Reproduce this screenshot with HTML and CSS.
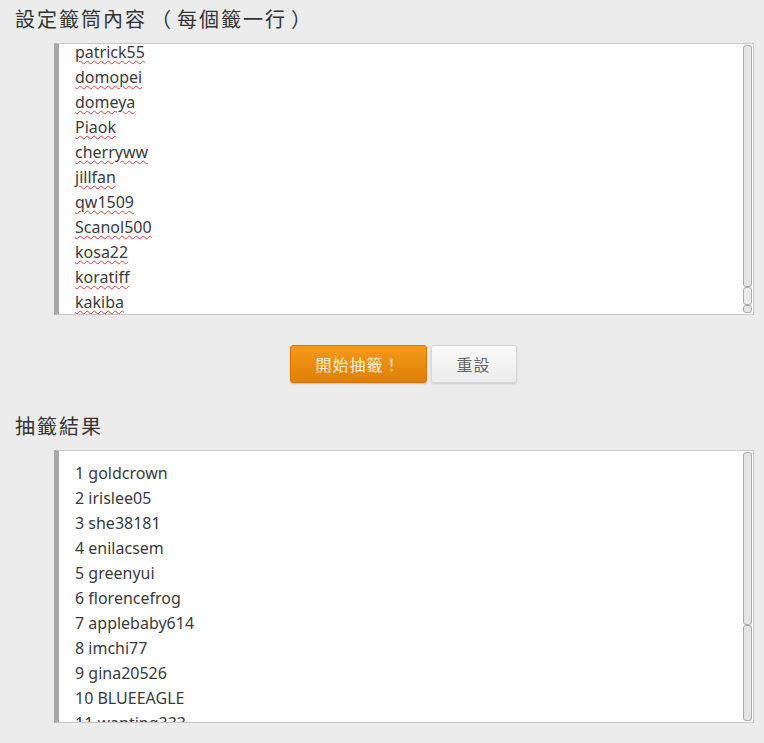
FILE: index.html
```html
<!DOCTYPE html>
<html>
<head>
  <meta charset="UTF-8">
  <meta name="viewport" content="width=device-width, initial-scale=1.0">
  <title>抽籤</title>
  <link rel="stylesheet" href="styles.css">
</head>
<body>
  <div class="page">
    <h2 class="label">設定籤筒內容<span class="paren">（</span>每個籤一行<span class="paren">）</span></h2>
    <div class="box box-input">
      <div class="lines lines-input">
        <div><span class="typo">patrick55</span></div>
        <div><span class="typo">domopei</span></div>
        <div><span class="typo">domeya</span></div>
        <div><span class="typo">Piaok</span></div>
        <div><span class="typo">cherryww</span></div>
        <div><span class="typo">jillfan</span></div>
        <div><span class="typo">qw1509</span></div>
        <div><span class="typo">Scanol500</span></div>
        <div><span class="typo">kosa22</span></div>
        <div><span class="typo">koratiff</span></div>
        <div><span class="typo">kakiba</span></div>
      </div>
      <div class="scroll scroll-input">
        <div class="thumb"></div>
        <div class="track"></div>
        <div class="track-end"></div>
      </div>
    </div>

    <div class="actions">
      <button class="btn btn-draw">開始抽籤！</button>
      <button class="btn btn-reset">重設</button>
    </div>

    <h2 class="label label-result">抽籤結果</h2>
    <div class="box box-result">
      <div class="lines lines-result">
        <div>1 goldcrown</div>
        <div>2 irislee05</div>
        <div>3 she38181</div>
        <div>4 enilacsem</div>
        <div>5 greenyui</div>
        <div>6 florencefrog</div>
        <div>7 applebaby614</div>
        <div>8 imchi77</div>
        <div>9 gina20526</div>
        <div>10 BLUEEAGLE</div>
        <div>11 wanting333</div>
      </div>
      <div class="scroll scroll-result">
        <div class="thumb"></div>
        <div class="track"></div>
      </div>
    </div>
  </div>
</body>
</html>
```

FILE: styles.css
```css
body {
  margin: 0;
  background-color: #ececec;
  font-family: 'Noto Sans', 'Noto Sans CJK TC', sans-serif;
  color: #333333;
}

.page {
  padding: 4px 10px 0 15px;
}

.label {
  margin: 0;
  font-size: 20px;
  font-weight: 400;
  line-height: 32px;
  letter-spacing: 2px;
  color: #333333;
}

/* centre the full-width brackets in their cell */
.paren {
  display: inline-block;
  width: 28px;
  text-align: center;
  letter-spacing: 0;
  margin-right: 2px;
}

.label-result {
  margin-top: 28px;
}

.box {
  display: flex;
  margin: 7px 0 0 39px;
  background-color: #ffffff;
  border: 1px solid #c8c8c8;
  border-left: 5px solid #a8a8a8;
  overflow: hidden;
}

.box-input {
  height: 270px;
}

.box-result {
  height: 271px;
}

.lines {
  flex: 1;
  padding-left: 16px;
  font-size: 16px;
  line-height: 25px;
  color: #3a3a3a;
}

.lines-input {
  margin-top: -4px;
}

.lines-result {
  padding-top: 10px;
}

.typo {
  text-decoration: underline wavy #e04040;
  text-decoration-thickness: 1px;
  text-underline-offset: 2px;
}

.scroll {
  display: flex;
  flex-direction: column;
  width: 9px;
  margin: 1px 1px 1px 0;
}

.scroll .thumb,
.scroll .track,
.scroll .track-end {
  background-color: #e4e4e4;
  border: 1px solid #a9a9a9;
  border-radius: 3px;
}

.scroll-input .thumb {
  height: 240px;
}

.scroll-input .track {
  height: 16px;
  background-color: #ececec;
}

.scroll-input .track-end {
  flex: 1;
}

.scroll-result .thumb {
  height: 171px;
}

.scroll-result .track {
  flex: 1;
}

.actions {
  display: flex;
  justify-content: center;
  gap: 4px;
  margin: 30px 0 0 37px;
}

.btn {
  height: 38px;
  font-family: 'Noto Sans', 'Noto Sans CJK TC', sans-serif;
  font-size: 16px;
  letter-spacing: 1px;
  border-radius: 3px;
  cursor: pointer;
}

.btn-draw {
  width: 137px;
  color: #fdf0dc;
  background: linear-gradient(#f49b1c, #e07f05);
  border: 1px solid #d27705;
  box-shadow: 0 1px 2px rgba(0, 0, 0, 0.2);
}

.btn-reset {
  width: 86px;
  color: #666666;
  background: linear-gradient(#f9f9f9, #ececec);
  border: 1px solid #d6d6d6;
  box-shadow: 0 1px 2px rgba(0, 0, 0, 0.15);
}
```
